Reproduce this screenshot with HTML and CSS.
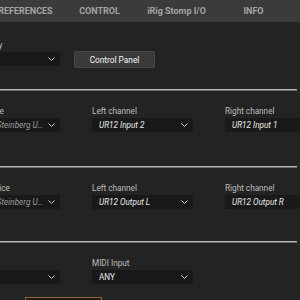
FILE: index.html
```html
<!DOCTYPE html>
<html lang="en">
<head>
    <meta charset="UTF-8">
    <meta name="viewport" content="width=device-width, initial-scale=1.0">
    <title>Preferences</title>
    <link rel="stylesheet" href="styles.css">
</head>
<body>
    <div class="tabs">
        <div class="tab">PREFERENCES</div>
        <div class="tab">CONTROL</div>
        <div class="tab">iRig Stomp I/O</div>
        <div class="tab">INFO</div>
    </div>
    <div class="main">
        <div class="section section-top">
            <div class="field">
                <div class="label">Low latency</div>
                <div class="select"><span class="value"></span><svg class="chevron" width="7" height="4" viewBox="0 0 7 4"><path d="M0.5 0.5 L3.5 3.5 L6.5 0.5" fill="none" stroke="#d0d0d0" stroke-width="1"/></svg></div>
            </div>
            <button type="button" class="panel-button">Control Panel</button>
        </div>
        <div class="section">
            <div class="field">
                <div class="label">Input Device</div>
                <div class="select"><span class="value dim">Yamaha Steinberg USB ASIO</span><svg class="chevron" width="7" height="4" viewBox="0 0 7 4"><path d="M0.5 0.5 L3.5 3.5 L6.5 0.5" fill="none" stroke="#d0d0d0" stroke-width="1"/></svg></div>
            </div>
            <div class="field">
                <div class="label">Left channel</div>
                <div class="select"><span class="value">UR12 Input 2</span><svg class="chevron" width="7" height="4" viewBox="0 0 7 4"><path d="M0.5 0.5 L3.5 3.5 L6.5 0.5" fill="none" stroke="#d0d0d0" stroke-width="1"/></svg></div>
            </div>
            <div class="field">
                <div class="label">Right channel</div>
                <div class="select"><span class="value">UR12 Input 1</span><svg class="chevron" width="7" height="4" viewBox="0 0 7 4"><path d="M0.5 0.5 L3.5 3.5 L6.5 0.5" fill="none" stroke="#d0d0d0" stroke-width="1"/></svg></div>
            </div>
        </div>
        <div class="section section-out">
            <div class="field">
                <div class="label">Output Device</div>
                <div class="select"><span class="value dim">Yamaha Steinberg USB ASIO</span><svg class="chevron" width="7" height="4" viewBox="0 0 7 4"><path d="M0.5 0.5 L3.5 3.5 L6.5 0.5" fill="none" stroke="#d0d0d0" stroke-width="1"/></svg></div>
            </div>
            <div class="field">
                <div class="label">Left channel</div>
                <div class="select"><span class="value">UR12 Output L</span><svg class="chevron" width="7" height="4" viewBox="0 0 7 4"><path d="M0.5 0.5 L3.5 3.5 L6.5 0.5" fill="none" stroke="#d0d0d0" stroke-width="1"/></svg></div>
            </div>
            <div class="field">
                <div class="label">Right channel</div>
                <div class="select"><span class="value">UR12 Output R</span><svg class="chevron" width="7" height="4" viewBox="0 0 7 4"><path d="M0.5 0.5 L3.5 3.5 L6.5 0.5" fill="none" stroke="#d0d0d0" stroke-width="1"/></svg></div>
            </div>
        </div>
        <div class="section section-midi">
            <div class="field">
                <div class="label">MIDI</div>
                <div class="select"><span class="value"></span><svg class="chevron" width="7" height="4" viewBox="0 0 7 4"><path d="M0.5 0.5 L3.5 3.5 L6.5 0.5" fill="none" stroke="#d0d0d0" stroke-width="1"/></svg></div>
            </div>
            <div class="field">
                <div class="label">MIDI Input</div>
                <div class="select"><span class="value upright">ANY</span><svg class="chevron" width="7" height="4" viewBox="0 0 7 4"><path d="M0.5 0.5 L3.5 3.5 L6.5 0.5" fill="none" stroke="#d0d0d0" stroke-width="1"/></svg></div>
            </div>
        </div>
        <div class="footer-row">
            <div class="pedal"></div>
        </div>
    </div>
</body>
</html>
```

FILE: styles.css
```css
body {
    margin: 0;
    background-color: #232323;
    font-family: Roboto, "Liberation Sans", sans-serif;
    overflow: hidden;
    width: 300px;
    height: 300px;
}
.tabs {
    display: flex;
    height: 22px;
    background-color: #3b3b3b;
    margin-left: -16px;
}
.tab {
    flex: 0 0 77px;
    text-align: center;
    line-height: 23px;
    font-size: 9px;
    font-weight: bold;
    color: #a4a4a4;
    white-space: nowrap;
}
.main {
    margin-left: -41px;
    width: 338px;
}
.section {
    display: grid;
    grid-template-columns: 101px 101px 101px;
    column-gap: 32px;
    border-top: 1px solid #b4b4b4;
    box-shadow: inset 0 1px 0 #6c6c6c;
    padding-top: 15px;
    padding-bottom: 34px;
}
.section-top {
    display: flex;
    align-items: flex-end;
    column-gap: 0;
    border-top: none;
    box-shadow: none;
    padding-top: 17px;
    padding-bottom: 23px;
}
.section-out {
    padding-bottom: 32px;
}
.section-midi {
    padding-bottom: 13px;
}
.field {
    width: 101px;
}
.label {
    height: 12px;
    line-height: 12px;
    font-size: 8.2px;
    color: #bdbdbd;
    margin-bottom: 1px;
    white-space: nowrap;
}
.select {
    display: flex;
    align-items: center;
    height: 14px;
    background-color: #191919;
    padding-left: 7px;
    padding-right: 5px;
}
.value {
    flex: 1;
    font-size: 8.2px;
    font-style: italic;
    color: #e8e8e8;
    white-space: nowrap;
    overflow: hidden;
    text-overflow: ellipsis;
}
.value.dim {
    color: #9c9c9c;
}
.value.upright {
    font-style: normal;
}
.chevron {
    flex: 0 0 7px;
    margin-left: 4px;
}
.panel-button {
    width: 81px;
    height: 17px;
    margin-left: 14px;
    margin-bottom: -2px;
    background-color: #3a3a3a;
    border: 1px solid #474747;
    border-radius: 2px;
    color: #f4f4f4;
    font-family: Roboto, "Liberation Sans", sans-serif;
    font-size: 8.3px;
    padding: 0;
}
.footer-row {
    display: flex;
    padding-left: 66px;
}
.pedal {
    width: 75px;
    height: 10px;
    border: 1px solid #8a6a38;
    border-bottom: none;
    background-color: #1e1a16;
}
```
